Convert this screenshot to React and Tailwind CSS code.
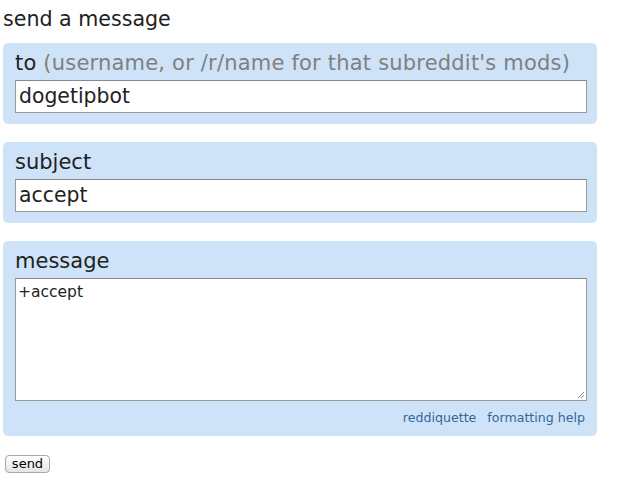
export default function App() {
  return (
    <div className="min-h-screen bg-white text-[#222] font-['DejaVu_Sans',Verdana,sans-serif]">
      {/* TITLE */}
      <h1 className="pl-[3px] pt-[7px] h-[43px] text-[20.6px] leading-[24px] font-normal">
        send a message
      </h1>

      {/* TO */}
      <div className="ml-[3px] w-[594px] rounded-[5px] bg-[#cee3f8] px-[12px] pt-[7px] pb-[11px]">
        <div className="text-[21px] leading-[26px] mb-[4px] tracking-[0.2px]">
          to <span className="text-[#808080]">(username, or /r/name for that subreddit's mods)</span>
        </div>
        <div className="h-[33px] w-[572px] border border-[#999] border-t-[#888] bg-white px-[3px] text-[20.4px] leading-[31px]">
          dogetipbot
        </div>
      </div>

      {/* SUBJECT */}
      <div className="ml-[3px] mt-[18px] w-[594px] rounded-[5px] bg-[#cee3f8] px-[12px] pt-[7px] pb-[11px]">
        <div className="text-[21px] leading-[26px] mb-[4px]">subject</div>
        <div className="h-[33px] w-[572px] border border-[#999] border-t-[#888] bg-white px-[3px] text-[20.4px] leading-[31px]">
          accept
        </div>
      </div>

      {/* MESSAGE */}
      <div className="ml-[3px] mt-[18px] w-[594px] rounded-[5px] bg-[#cee3f8] px-[12px] pt-[7px] pb-[10px]">
        <div className="text-[21px] leading-[26px] mb-[4px]">message</div>
        <div className="relative h-[123px] w-[572px] border border-[#999] border-t-[#888] bg-white px-[2px] py-[3px] text-[15.5px] leading-[20px]">
          +accept
          <svg className="absolute right-[1px] bottom-[1px]" width="8" height="8" viewBox="0 0 8 8">
            <path d="M7 1 L1 7 M7 4 L4 7" stroke="#888" strokeWidth="1" />
          </svg>
        </div>
        <div className="mt-[9px] flex justify-end gap-[11px] text-[12.6px] leading-[16px] text-[#369]">
          <span>reddiquette</span>
          <span>formatting help</span>
        </div>
      </div>

      {/* SEND */}
      <div className="flex pl-[5px] pt-[19px]">
        <button className="h-[18px] w-[45px] rounded-[4px] border border-[#aaa] bg-gradient-to-b from-white to-[#e4e4e4] text-[13px] leading-[16px] text-black">
          send
        </button>
      </div>
    </div>
  );
}
